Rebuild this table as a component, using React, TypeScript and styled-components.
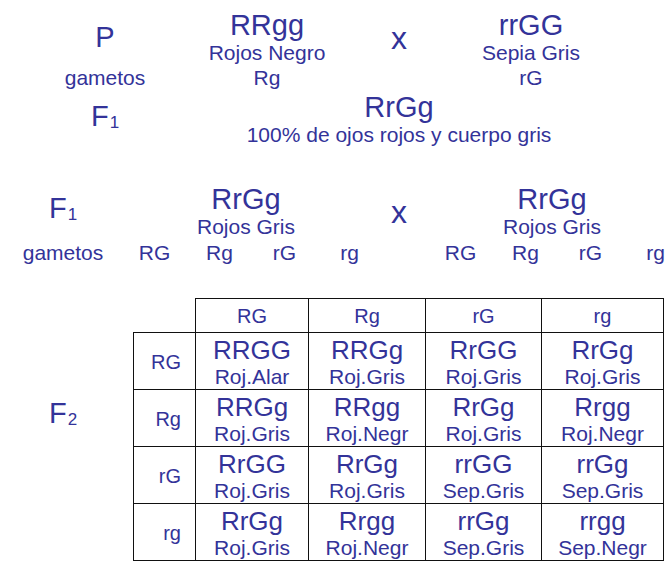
import React from "react";
import styled, { createGlobalStyle } from "styled-components";

const GlobalStyle = createGlobalStyle`
  html, body { margin: 0; padding: 0; background: #ffffff; overflow: hidden; }
  body { font-family: "Liberation Sans", Arial, sans-serif; color: #333399; }
`;

const Page = styled.div`
  width: 672px;
  height: 568px;
  box-sizing: border-box;
  padding-top: 9px;
  overflow: hidden;
  display: flex;
  flex-direction: column;
`;

const TopCross = styled.div`
  display: grid;
  grid-template-columns: 170px 154px 110px 154px;
  grid-template-rows: 56px 24px 56px;
  row-gap: 1px;
  padding-left: 20px;
  align-items: center;
  justify-items: center;
`;

const SecondCross = styled.div`
  display: grid;
  grid-template-columns: 126px 240px 66px 240px;
  grid-template-rows: 56px;
  margin-top: 36px;
  align-items: center;
  justify-items: center;
`;

const Stack = styled.div<{ $span?: boolean }>`
  display: flex;
  flex-direction: column;
  align-items: center;
  grid-column: ${(p) => (p.$span ? "2 / 5" : "auto")};
  white-space: nowrap;
`;

const Geno = styled.div`
  font-size: 29px;
  line-height: 32px;
`;

const Pheno = styled.div`
  font-size: 21px;
  line-height: 24px;
  white-space: nowrap;
`;

const Gen = styled.div`
  font-size: 29px;
  line-height: 32px;
  white-space: nowrap;
`;

const Sub = styled.span`
  font-size: 17px;
  vertical-align: -2px;
  margin-left: 1px;
`;

const Cross = styled.div`
  font-size: 32px;
  line-height: 32px;
  margin-top: 2px;
`;

const Small = styled.div`
  font-size: 21px;
  line-height: 24px;
  white-space: nowrap;
`;

const GameteRow = styled.div`
  display: flex;
  margin-top: 2px;
  padding-left: 4px;
  width: 700px;
`;

const GameteLabel = styled.div`
  width: 118px;
  text-align: center;
  font-size: 21px;
  line-height: 24px;
`;

const GameteGroup = styled.div<{ $offset: number }>`
  display: grid;
  grid-template-columns: repeat(4, 65px);
  margin-left: ${(p) => p.$offset}px;
`;

const Gamete = styled.div`
  text-align: center;
  font-size: 21px;
  line-height: 24px;
`;

const TableSection = styled.div`
  display: flex;
  align-items: flex-start;
  margin-top: 33px;
`;

const F2Label = styled.div`
  width: 126px;
  margin-top: 99px;
  text-align: center;
  font-size: 29px;
  line-height: 32px;
`;

const Punnett = styled.table`
  border-collapse: collapse;
  table-layout: fixed;
  margin-left: 7px;
  color: #333399;
`;

const Col = styled.col<{ $w: number }>`
  width: ${(p) => p.$w}px;
`;

const HeadRow = styled.tr`
  height: 34px;
`;

const BodyRow = styled.tr`
  height: 57px;
`;

const Corner = styled.td`
  border: none;
  padding: 0;
`;

const HeadCell = styled.th`
  border: 1px solid #111111;
  padding: 1px 0 0 0;
  font-weight: normal;
  font-size: 20px;
  line-height: 24px;
  text-align: center;
  vertical-align: middle;
`;

const RowHead = styled.th`
  border: 1px solid #111111;
  padding: 2px 14px 0 0;
  font-weight: normal;
  font-size: 20px;
  line-height: 24px;
  text-align: right;
  vertical-align: middle;
`;

const Cell = styled.td`
  border: 1px solid #111111;
  padding: 2px 0 0 0;
  text-align: center;
  vertical-align: middle;
`;

const CellGeno = styled.div`
  font-size: 26px;
  line-height: 30px;
`;

const CellPheno = styled.div`
  font-size: 21px;
  line-height: 24px;
`;

const gametes = ["RG", "Rg", "rG", "rg"];

const grid: [string, string][][] = [
  [
    ["RRGG", "Roj.Alar"],
    ["RRGg", "Roj.Gris"],
    ["RrGG", "Roj.Gris"],
    ["RrGg", "Roj.Gris"],
  ],
  [
    ["RRGg", "Roj.Gris"],
    ["RRgg", "Roj.Negr"],
    ["RrGg", "Roj.Gris"],
    ["Rrgg", "Roj.Negr"],
  ],
  [
    ["RrGG", "Roj.Gris"],
    ["RrGg", "Roj.Gris"],
    ["rrGG", "Sep.Gris"],
    ["rrGg", "Sep.Gris"],
  ],
  [
    ["RrGg", "Roj.Gris"],
    ["Rrgg", "Roj.Negr"],
    ["rrGg", "Sep.Gris"],
    ["rrgg", "Sep.Negr"],
  ],
];

const colWidths = [62, 113, 117, 116, 122];

export default function App() {
  return (
    <>
      <GlobalStyle />
      <Page>
        <TopCross>
          <Gen>P</Gen>
          <Stack>
            <Geno>RRgg</Geno>
            <Pheno>Rojos Negro</Pheno>
          </Stack>
          <Cross>x</Cross>
          <Stack>
            <Geno>rrGG</Geno>
            <Pheno>Sepia Gris</Pheno>
          </Stack>

          <Small>gametos</Small>
          <Small>Rg</Small>
          <div />
          <Small>rG</Small>

          <Gen>
            F<Sub>1</Sub>
          </Gen>
          <Stack $span>
            <Geno>RrGg</Geno>
            <Pheno>100% de ojos rojos y cuerpo gris</Pheno>
          </Stack>
        </TopCross>

        <SecondCross>
          <Gen>
            F<Sub>1</Sub>
          </Gen>
          <Stack>
            <Geno>RrGg</Geno>
            <Pheno>Rojos Gris</Pheno>
          </Stack>
          <Cross>x</Cross>
          <Stack>
            <Geno>RrGg</Geno>
            <Pheno>Rojos Gris</Pheno>
          </Stack>
        </SecondCross>

        <GameteRow>
          <GameteLabel>gametos</GameteLabel>
          <GameteGroup $offset={0}>
            {gametes.map((g) => (
              <Gamete key={g}>{g}</Gamete>
            ))}
          </GameteGroup>
          <GameteGroup $offset={46}>
            {gametes.map((g) => (
              <Gamete key={g}>{g}</Gamete>
            ))}
          </GameteGroup>
        </GameteRow>

        <TableSection>
          <F2Label>
            F<Sub>2</Sub>
          </F2Label>
          <Punnett>
            <colgroup>
              {colWidths.map((w, i) => (
                <Col key={i} $w={w} />
              ))}
            </colgroup>
            <tbody>
              <HeadRow>
                <Corner />
                {gametes.map((g) => (
                  <HeadCell key={g}>{g}</HeadCell>
                ))}
              </HeadRow>
              {grid.map((row, r) => (
                <BodyRow key={r}>
                  <RowHead>{gametes[r]}</RowHead>
                  {row.map(([geno, pheno], c) => (
                    <Cell key={c}>
                      <CellGeno>{geno}</CellGeno>
                      <CellPheno>{pheno}</CellPheno>
                    </Cell>
                  ))}
                </BodyRow>
              ))}
            </tbody>
          </Punnett>
        </TableSection>
      </Page>
    </>
  );
}
